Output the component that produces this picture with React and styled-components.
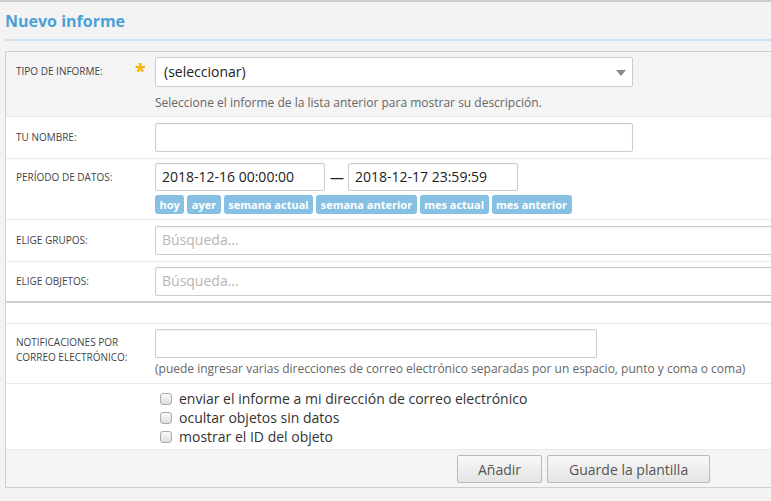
import React from "react";
import styled, { createGlobalStyle } from "styled-components";

const Global = createGlobalStyle`
  html, body { margin: 0; padding: 0; overflow: hidden; }
  body {
    background: #f3f3f3;
    font-family: "Open Sans", "DejaVu Sans", sans-serif;
    color: #333;
    width: 771px;
    height: 501px;
  }
  * { box-sizing: border-box; }
`;

const Page = styled.div`
  border-top: 2px solid #cdcdcd;
  min-height: 501px;
`;

const Header = styled.div`
  margin-left: 5px;
  padding: 8px 0 7px 0;
  border-bottom: 2px solid #cfe3f2;
`;

const Title = styled.h1`
  margin: 0;
  font-size: 16px;
  line-height: 22px;
  font-weight: 700;
  color: #4ba0d6;
`;

const Panel = styled.div`
  margin: 10px 0 0 5px;
  width: 900px;
  border: 1px solid #cfcfcf;
  border-right: none;
  background: #fff;
`;

const Row = styled.div`
  display: grid;
  grid-template-columns: 149px 1fr;
  padding: ${(p) => p.$pad || "6px 0 6px 0"};
  background: ${(p) => (p.$gray ? "#f4f4f4" : "#fff")};
  border-top: ${(p) => (p.$first ? "none" : p.$thick ? "2px solid #cfcfcf" : "1px solid #ebebeb")};
  min-height: ${(p) => p.$minH || "auto"};
`;

const Label = styled.div`
  display: flex;
  align-items: flex-start;
  padding: ${(p) => (p.$two ? "6px 0 0 10px" : "7px 0 0 10px")};
  font-size: 10px;
  line-height: 15px;
  text-transform: uppercase;
  color: #444;
`;

const Star = styled.span`
  margin-left: auto;
  margin-right: 9px;
  margin-top: -3px;
  color: #f7b500;
  font-size: 20px;
  font-weight: 700;
  line-height: 20px;
`;

const Field = styled.div`
  display: flex;
  flex-direction: column;
  align-items: flex-start;
`;

const Select = styled.div`
  position: relative;
  width: 478px;
  height: 30px;
  border: 1px solid #cccccc;
  border-radius: 2px;
  background: #fff;
  font-size: 14px;
  line-height: 28px;
  padding-left: 8px;
  color: #222;
`;

const Arrow = styled.span`
  position: absolute;
  right: 6px;
  top: 12px;
  width: 0;
  height: 0;
  border-left: 5px solid transparent;
  border-right: 5px solid transparent;
  border-top: 6px solid #8a8a8a;
`;

const Hint = styled.div`
  font-size: 12px;
  line-height: 16px;
  color: #666;
  margin-top: ${(p) => p.$mt || "8px"};
`;

const Input = styled.div`
  width: ${(p) => p.$w};
  height: ${(p) => p.$h || "29px"};
  border: 1px solid #cccccc;
  border-radius: 2px;
  background: #fff;
  box-shadow: inset 0 1px 2px rgba(0, 0, 0, 0.05);
  font-size: 14px;
  line-height: 26px;
  padding-left: 6px;
  color: ${(p) => (p.$placeholder ? "#b5b5b5" : "#222")};
  white-space: nowrap;
`;

const DateLine = styled.div`
  display: flex;
  align-items: center;
  gap: 5px;
`;

const Dash = styled.span`
  font-size: 14px;
  color: #222;
  width: 13px;
  text-align: center;
`;

const Quick = styled.div`
  display: flex;
  gap: 3px;
  margin-top: 4px;
`;

const Chip = styled.span`
  height: 19px;
  padding: 0 4.5px;
  background: #86c1e3;
  border-radius: 3px;
  color: #fff;
  font-size: 11px;
  font-weight: 700;
  line-height: 19px;
`;

const Checks = styled.div`
  display: flex;
  flex-direction: column;
  padding-left: 5px;
`;

const CheckLine = styled.label`
  display: flex;
  align-items: center;
  gap: 7px;
  font-size: 14px;
  line-height: 19px;
  color: #333;
`;

const Box = styled.span`
  width: 12px;
  height: 12px;
  border: 1px solid #a9a9a9;
  border-radius: 3px;
  background: linear-gradient(#fafafa, #dedede);
`;

const Footer = styled.div`
  display: flex;
  gap: 5px;
  padding: 5px 0 4px 451px;
  background: #f4f4f4;
  border-top: 1px solid #ebebeb;
`;

const Button = styled.button`
  height: 28px;
  padding: 0 ${(p) => p.$px || "20px"};
  border: 1px solid #b9b9b9;
  border-radius: 2px;
  background: linear-gradient(#f8f8f8, #e4e4e4);
  font-family: "Open Sans", "DejaVu Sans", sans-serif;
  font-size: 14px;
  color: #555;
`;

export default function App() {
  const chips = ["hoy", "ayer", "semana actual", "semana anterior", "mes actual", "mes anterior"];
  const checks = [
    "enviar el informe a mi dirección de correo electrónico",
    "ocultar objetos sin datos",
    "mostrar el ID del objeto",
  ];
  return (
    <Page>
      <Global />
      <Header>
        <Title>Nuevo informe</Title>
      </Header>
      <Panel>
        <Row $gray $first $pad="5px 0 5px 0">
          <Label>
            Tipo de informe:<Star>*</Star>
          </Label>
          <Field>
            <Select>
              (seleccionar)
              <Arrow />
            </Select>
            <Hint>Seleccione el informe de la lista anterior para mostrar su descripción.</Hint>
          </Field>
        </Row>
        <Row>
          <Label>Tu nombre:</Label>
          <Field>
            <Input $w="478px" />
          </Field>
        </Row>
        <Row $pad="4px 0 5px 0">
          <Label>Período de datos:</Label>
          <Field>
            <DateLine>
              <Input $w="170px" $h="28px">2018-12-16 00:00:00</Input>
              <Dash>—</Dash>
              <Input $w="170px" $h="28px">2018-12-17 23:59:59</Input>
            </DateLine>
            <Quick>
              {chips.map((c) => (
                <Chip key={c}>{c}</Chip>
              ))}
            </Quick>
          </Field>
        </Row>
        <Row>
          <Label>Elige grupos:</Label>
          <Field>
            <Input $w="700px" $placeholder>Búsqueda...</Input>
          </Field>
        </Row>
        <Row $pad="5px 0 5px 0">
          <Label>Elige objetos:</Label>
          <Field>
            <Input $w="700px" $placeholder>Búsqueda...</Input>
          </Field>
        </Row>
        <Row $thick $minH="22px" $pad="0" />
        <Row $pad="5px 0 6px 0">
          <Label $two>
            Notificaciones por
            <br />
            correo electrónico:
          </Label>
          <Field>
            <Input $w="442px" />
            <Hint $mt="3px">
              (puede ingresar varias direcciones de correo electrónico separadas por un espacio, punto y coma o coma)
            </Hint>
          </Field>
        </Row>
        <Row $pad="5px 0 3px 0">
          <div />
          <Checks>
            {checks.map((c) => (
              <CheckLine key={c}>
                <Box />
                {c}
              </CheckLine>
            ))}
          </Checks>
        </Row>
        <Footer>
          <Button>Añadir</Button>
          <Button $px="21px">Guarde la plantilla</Button>
        </Footer>
      </Panel>
    </Page>
  );
}
